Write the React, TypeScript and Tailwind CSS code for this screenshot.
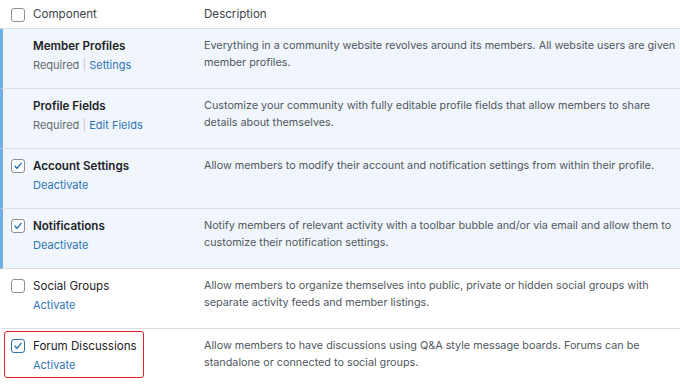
import React from 'react';

type Row = {
  name: string;
  desc: string;
  active: boolean;
  required?: string;
  action: string;
  checked?: boolean;
  highlight?: boolean;
};

const rows: Row[] = [
  {
    name: 'Member Profiles',
    desc: 'Everything in a community website revolves around its members. All website users are given member profiles.',
    active: true,
    required: 'Required',
    action: 'Settings',
  },
  {
    name: 'Profile Fields',
    desc: 'Customize your community with fully editable profile fields that allow members to share details about themselves.',
    active: true,
    required: 'Required',
    action: 'Edit Fields',
  },
  {
    name: 'Account Settings',
    desc: 'Allow members to modify their account and notification settings from within their profile.',
    active: true,
    action: 'Deactivate',
    checked: true,
  },
  {
    name: 'Notifications',
    desc: 'Notify members of relevant activity with a toolbar bubble and/or via email and allow them to customize their notification settings.',
    active: true,
    action: 'Deactivate',
    checked: true,
  },
  {
    name: 'Social Groups',
    desc: 'Allow members to organize themselves into public, private or hidden social groups with separate activity feeds and member listings.',
    active: false,
    action: 'Activate',
  },
  {
    name: 'Forum Discussions',
    desc: 'Allow members to have discussions using Q&A style message boards. Forums can be standalone or connected to social groups.',
    active: false,
    action: 'Activate',
    checked: true,
    highlight: true,
  },
];

const Checkbox = ({ checked, focus }: { checked?: boolean; focus?: boolean }) => (
  <span
    className={`flex h-[14px] w-[14px] items-center justify-center rounded-[3px] bg-white ${
      focus ? 'border-[1.5px] border-[#2f6fb3]' : 'border border-[#8c8f94]'
    }`}
  >
    {checked && (
      <svg width="10" height="10" viewBox="0 0 12 12" fill="none">
        <path d="M2.3 6.3 4.8 8.8 9.8 2.8" stroke="#2271b1" strokeWidth="1.7" strokeLinecap="round" strokeLinejoin="round" />
      </svg>
    )}
  </span>
);

export default function App() {
  return (
    <div className="h-[384px] w-[680px] overflow-hidden bg-white" style={{ fontFamily: 'Inter, "Noto Sans", sans-serif' }}>
      {/* header */}
      <div className="flex h-[29px] items-center border-b border-[#dcdcde] bg-white pt-[1px]">
        <div className="flex w-[33px] shrink-0 justify-end pr-[8px]">
          <Checkbox />
        </div>
        <div className="w-[171px] shrink-0 text-[11.6px] text-[#3c434a]">Component</div>
        <div className="text-[11.6px] text-[#3c434a]">Description</div>
      </div>

      {rows.map((r) => (
        <div
          key={r.name}
          className={`flex h-[60px] border-b border-[#dcdcde] ${
            r.active ? 'border-l-[3px] border-l-[#72aee6] bg-[#f0f6fc]' : 'border-l-[3px] border-l-white bg-white'
          }`}
        >
          <div className="relative flex w-[201px] shrink-0 pt-[8px]">
            <div className="flex w-[30px] shrink-0 justify-end pr-[8px] pt-[2px]">
              {!r.required && <Checkbox checked={r.checked} focus={r.highlight} />}
            </div>
            <div>
              <div className={`text-[11.6px] leading-[18px] text-[#1d2327] ${r.active ? 'font-semibold' : ''}`}>{r.name}</div>
              <div className="mt-[1px] text-[11px] leading-[18px]">
                {r.required && (
                  <span className="text-[#646970]">
                    {r.required} <span className="text-[#c3c4c7]">|</span>{' '}
                  </span>
                )}
                <span className="text-[#2f74b5]">{r.action}</span>
              </div>
            </div>
            {r.highlight && (
              <div className="pointer-events-none absolute left-[1px] top-[2px] h-[47px] w-[140px] rounded-[3px] border-[1.5px] border-[#e8202a]" />
            )}
          </div>
          <div className="pr-[2px] pt-[8px] text-[10.8px] leading-[17px] text-[#50575e]">{r.desc}</div>
        </div>
      ))}
    </div>
  );
}
